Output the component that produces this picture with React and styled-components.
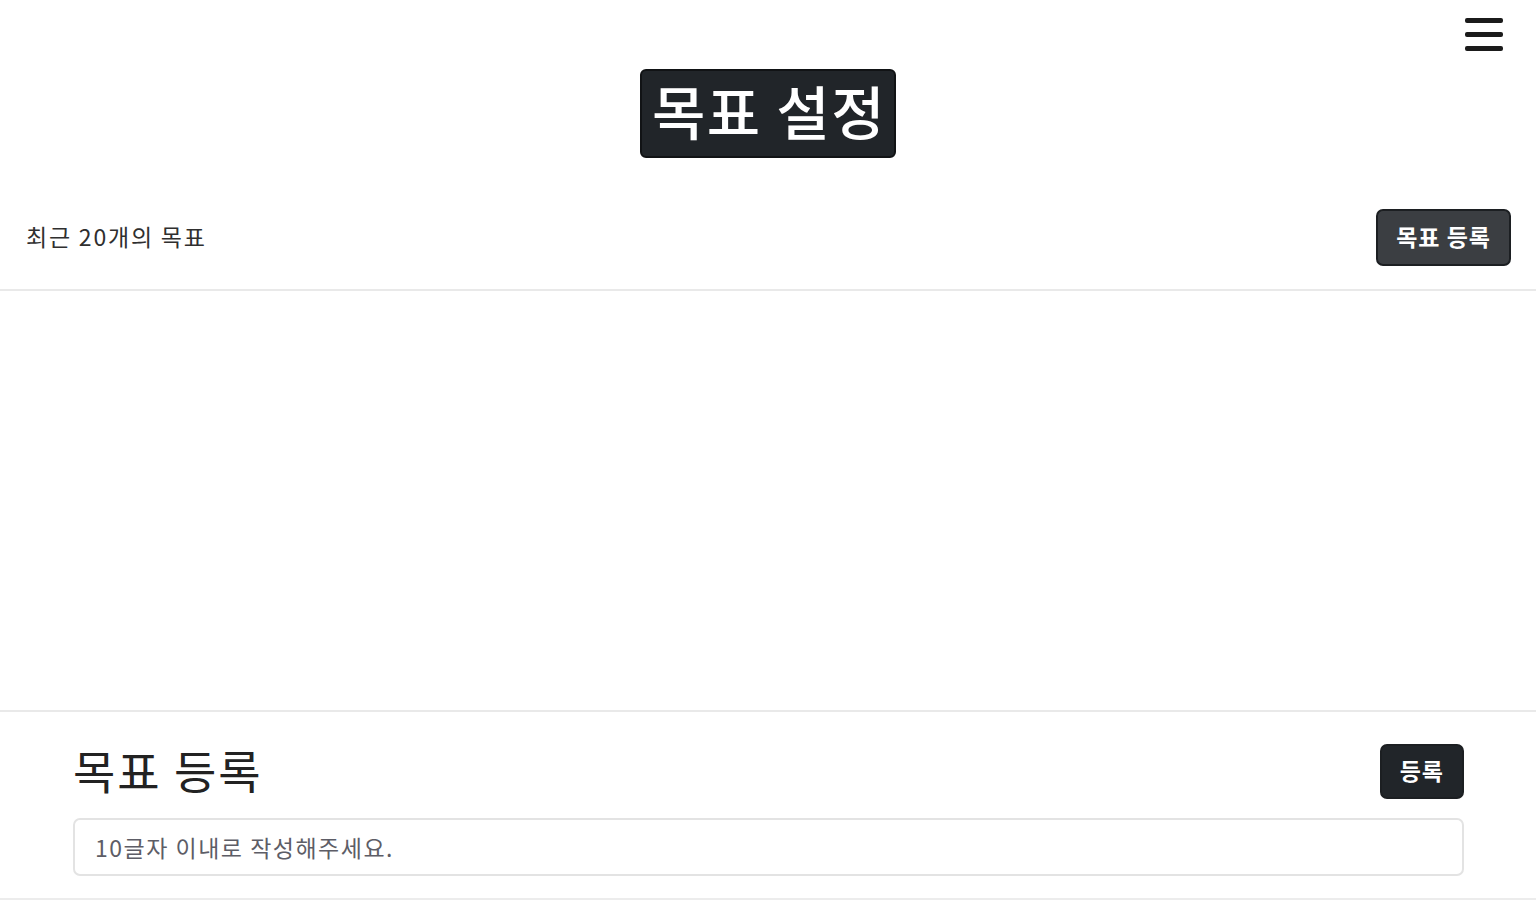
import React from "react";
import styled, { createGlobalStyle } from "styled-components";

const GlobalStyle = createGlobalStyle`
  html, body {
    margin: 0;
    padding: 0;
    background: #ffffff;
    font-family: "Noto Sans CJK KR", "Noto Sans", sans-serif;
    color: #212529;
  }
  * {
    box-sizing: border-box;
  }
`;

const Page = styled.div`
  width: 1536px;
  height: 900px;
  display: flex;
  flex-direction: column;
  overflow: hidden;
`;

const Header = styled.header`
  position: relative;
  height: 186px;
  display: flex;
  justify-content: center;
  padding-top: 69px;
`;

const MenuButton = styled.button`
  position: absolute;
  top: 13px;
  right: 32px;
  width: 40px;
  height: 42px;
  padding: 0;
  border: none;
  background: transparent;
  display: flex;
  flex-direction: column;
  justify-content: center;
  align-items: center;
  gap: 9px;
  cursor: pointer;

  span {
    display: block;
    width: 38px;
    height: 5px;
    border-radius: 2px;
    background: #1b1b1b;
  }
`;

const Title = styled.h1`
  margin: 0;
  height: 89px;
  padding: 0 8px 8px 10px;
  display: flex;
  align-items: center;
  background: #212529;
  color: #ffffff;
  border: 2px solid #111315;
  border-radius: 6px;
  font-size: 58px;
  font-weight: 500;
  letter-spacing: 1.5px;
  line-height: 1;
`;

const ListBar = styled.div`
  height: 105px;
  display: flex;
  align-items: center;
  justify-content: space-between;
  padding: 0 25px 0 26px;
  border-bottom: 2px solid #e9e9e9;
`;

const ListLabel = styled.span`
  font-size: 23px;
  color: #2f2f2f;
  letter-spacing: 1.8px;
  margin-top: -4px;
`;

const DarkButton = styled.button`
  display: flex;
  align-items: center;
  justify-content: center;
  height: ${({ $h }) => $h}px;
  padding: 0 ${({ $px }) => $px}px 3px;
  background: ${({ $bg }) => $bg};
  border: 2px solid #1c1f22;
  border-radius: 7px;
  color: #ffffff;
  font-family: inherit;
  font-size: 23px;
  font-weight: 700;
  letter-spacing: 1px;
  cursor: pointer;
`;

const ListArea = styled.main`
  flex: 1;
  border-bottom: 2px solid #e9e9e9;
`;

const Form = styled.section`
  height: 188px;
  padding: 32px 72px 0 73px;
  display: flex;
  flex-direction: column;
  gap: 19px;
  border-bottom: 2px solid #ececec;
`;

const FormTop = styled.div`
  display: flex;
  align-items: center;
  justify-content: space-between;
`;

const FormTitle = styled.h2`
  margin: 0;
  font-size: 46px;
  font-weight: 400;
  color: #222222;
  letter-spacing: 2px;
  line-height: 1.2;
  margin-top: -4px;
`;

const Input = styled.input`
  width: 100%;
  height: 58px;
  padding: 0 20px;
  border: 2px solid #e3e3e3;
  border-radius: 7px;
  font-family: inherit;
  font-size: 23px;
  letter-spacing: 1.5px;
  color: #333;
  outline: none;

  &::placeholder {
    color: #5d5d66;
  }
`;

export default function App() {
  return (
    <>
      <GlobalStyle />
      <Page>
        <Header>
          <MenuButton aria-label="menu">
            <span />
            <span />
            <span />
          </MenuButton>
          <Title>목표 설정</Title>
        </Header>
        <ListBar>
          <ListLabel>최근 20개의 목표</ListLabel>
          <DarkButton $h={57} $px={18} $bg="#3b3e42">
            목표 등록
          </DarkButton>
        </ListBar>
        <ListArea />
        <Form>
          <FormTop>
            <FormTitle>목표 등록</FormTitle>
            <DarkButton $h={55} $px={18} $bg="#212529">
              등록
            </DarkButton>
          </FormTop>
          <Input placeholder="10글자 이내로 작성해주세요." />
        </Form>
      </Page>
    </>
  );
}
